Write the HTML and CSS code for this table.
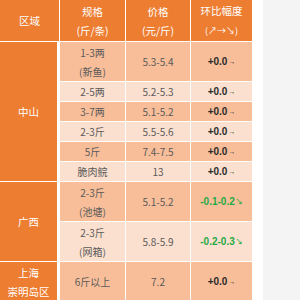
FILE: index.html
```html
<!DOCTYPE html>
<html lang="zh">
<head>
<meta charset="utf-8">
<link rel="stylesheet" href="styles.css">
</head>
<body>
<div class="page">
  <div class="table">
    <div class="hd">区域</div>
    <div class="hd"><span>规格<br>(斤/条)</span></div>
    <div class="hd"><span>价格<br>(元/斤)</span></div>
    <div class="hd"><span>环比幅度<br><span class="hint">(↗→↘)</span></span></div>

    <div class="area r6">中山</div>
    <div class="c dk"><span>1-3两<br>(新鱼)</span></div><div class="c dk">5.3-5.4</div><div class="c dk ch">+0.0<span class="ar">→</span></div>
    <div class="c lt">2-5两</div><div class="c lt">5.2-5.3</div><div class="c lt ch">+0.0<span class="ar">→</span></div>
    <div class="c dk">3-7两</div><div class="c dk">5.1-5.2</div><div class="c dk ch">+0.0<span class="ar">→</span></div>
    <div class="c lt">2-3斤</div><div class="c lt">5.5-5.6</div><div class="c lt ch">+0.0<span class="ar">→</span></div>
    <div class="c dk">5斤</div><div class="c dk">7.4-7.5</div><div class="c dk ch">+0.0<span class="ar">→</span></div>
    <div class="c lt">脆肉鲩</div><div class="c lt">13</div><div class="c lt ch">+0.0<span class="ar">→</span></div>

    <div class="area r2">广西</div>
    <div class="c dk"><span>2-3斤<br>(池塘)</span></div><div class="c dk">5.1-5.2</div><div class="c dk ch down">-0.1-0.2<span class="ar">↘</span></div>
    <div class="c lt"><span>2-3斤<br>(网箱)</span></div><div class="c lt">5.8-5.9</div><div class="c lt ch down">-0.2-0.3<span class="ar">↘</span></div>

    <div class="area"><span>上海<br>崇明岛区</span></div>
    <div class="c dk">6斤以上</div><div class="c dk">7.2</div><div class="c dk ch">+0.0<span class="ar">→</span></div>
  </div>
  <div class="side"></div>
</div>
</body>
</html>
```

FILE: styles.css
```css
html, body {
  margin: 0;
  padding: 0;
  background: #ffffff;
}
.page {
  display: flex;
  width: 300px;
  height: 300px;
  overflow: hidden;
  font-family: "Noto Sans CJK SC", "Noto Sans", sans-serif;
}
.table {
  display: grid;
  grid-template-columns: 59px 65px 64px 61px;
  grid-template-rows: 41px 39px 19px 19px 19px 19px 19px 39px 39px 39px;
  gap: 1px;
  width: 252px;
  flex: none;
  background: #ffffff;
}
.hd {
  background: #ed7d31;
  color: #ffffff;
  font-size: 10.5px;
  line-height: 19px;
  display: flex;
  align-items: center;
  justify-content: center;
  text-align: center;
  white-space: nowrap;
}
.hint {
  font-size: 9px;
}
.area {
  background: #ed7d31;
  color: #ffffff;
  font-size: 10.5px;
  line-height: 19px;
  display: flex;
  align-items: center;
  justify-content: center;
  text-align: center;
  margin-right: 2px;
}
.r6 { grid-row: span 6; }
.r2 { grid-row: span 2; }
.c {
  color: #5a5a5a;
  font-size: 10px;
  line-height: 19px;
  display: flex;
  align-items: center;
  justify-content: center;
  text-align: center;
  white-space: nowrap;
}
.dk { background: #f7be99; }
.lt { background: #fbe0cf; }
.ch {
  color: #2b2b2b;
  font-weight: bold;
  font-family: "Liberation Sans", "Noto Sans CJK SC", sans-serif;
}
.ar {
  font-size: 7px;
  margin-left: 1px;
  font-weight: bold;
}
.down { color: #1faa45; }
.side {
  flex: 1;
  margin-left: 11px;
  background: #f4f4f4;
}
```
